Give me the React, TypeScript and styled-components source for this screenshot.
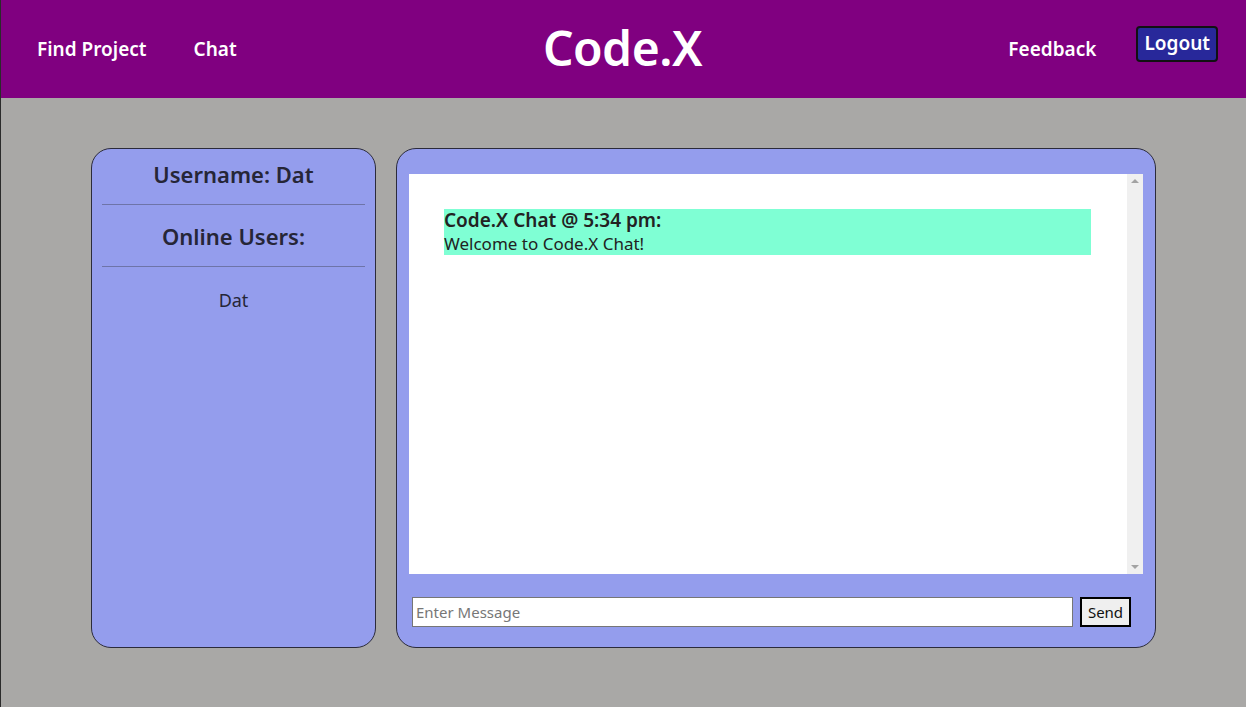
import React from "react";
import styled, { createGlobalStyle } from "styled-components";

const GlobalStyle = createGlobalStyle`
  html, body {
    margin: 0;
    padding: 0;
    height: 100%;
    background: #a9a8a6;
  }
  body {
    font-family: "Noto Sans", "Open Sans", sans-serif;
  }
  #root {
    min-height: 100%;
  }
`;

const Page = styled.div`
  min-height: 707px;
  border-left: 1px solid #2b2b2b;
  box-sizing: border-box;
  background: #a9a8a6;
`;

const Header = styled.header`
  height: 98px;
  background: #800080;
  display: grid;
  grid-template-columns: 1fr auto 1fr;
  align-items: center;
  padding: 0 28px 0 36px;
  box-sizing: border-box;
`;

const NavGroup = styled.nav<{ $right?: boolean }>`
  display: flex;
  align-items: center;
  gap: ${(p) => (p.$right ? "40px" : "47px")};
  justify-content: ${(p) => (p.$right ? "flex-end" : "flex-start")};
`;

const NavLink = styled.a`
  color: #fff;
  font-weight: 600;
  font-size: 19px;
  text-decoration: none;
  cursor: pointer;
`;

const Brand = styled.h1`
  margin: 0 10px 0 0;
  color: #fff;
  font-size: 48px;
  font-weight: 600;
  letter-spacing: -0.5px;
  padding-bottom: 4px;
`;

const LogoutButton = styled.button`
  background: #28289a;
  color: #fff;
  border: 2px solid #111;
  border-radius: 4px;
  font-family: inherit;
  font-size: 19px;
  font-weight: 600;
  padding: 2px 6px 4px;
  margin-top: -10px;
  cursor: pointer;
`;

const Main = styled.main`
  display: flex;
  gap: 20px;
  padding: 50px 0 0 90px;
`;

const Panel = styled.section`
  background: #949ded;
  border: 1px solid #2b2b3b;
  border-radius: 20px;
  height: 500px;
  box-sizing: border-box;
`;

const Sidebar = styled(Panel)`
  width: 285px;
  padding: 9px 10px 0;
  text-align: center;
  color: #262637;
`;

const SideTitle = styled.h2`
  margin: 0;
  font-size: 22px;
  font-weight: 600;
  line-height: 32px;
`;

const Divider = styled.hr`
  border: none;
  border-top: 1px solid #6e74a8;
  margin: 14px 0 15px;
`;

const UserItem = styled.div`
  font-size: 18px;
  margin-top: 21px;
`;

const ChatPanel = styled(Panel)`
  width: 760px;
  padding: 25px 12px 0;
  display: flex;
  flex-direction: column;
`;

const MessageArea = styled.div`
  height: 400px;
  background: #fff;
  display: flex;
  box-sizing: border-box;
`;

const Messages = styled.div`
  flex: 1;
  padding: 35px 36px 0 35px;
`;

const Scrollbar = styled.div`
  width: 16px;
  background: #f0f0f0;
  display: flex;
  flex-direction: column;
  justify-content: space-between;
  align-items: center;
  padding: 5px 0;
`;

const Arrow = styled.div<{ $down?: boolean }>`
  width: 0;
  height: 0;
  border-left: 4px solid transparent;
  border-right: 4px solid transparent;
  ${(p) =>
    p.$down
      ? "border-top: 4px solid #a3a3a3;"
      : "border-bottom: 4px solid #a3a3a3;"}
`;

const Message = styled.div`
  background: #7fffd4;
  color: #222;
  font-size: 17px;
  line-height: 23px;
  padding: 0;
`;

const MessageHead = styled.div`
  font-weight: 600;
  font-size: 19px;
`;

const InputRow = styled.form`
  display: flex;
  align-items: center;
  gap: 7px;
  margin-top: 23px;
  padding: 0 12px 0 3px;
`;

const MessageInput = styled.input`
  flex: 1;
  height: 30px;
  box-sizing: border-box;
  border: 1px solid #767676;
  font-family: inherit;
  font-size: 15px;
  padding: 0 3px;
  color: #222;
  &::placeholder {
    color: #777;
  }
`;

const SendButton = styled.button`
  height: 30px;
  width: 51px;
  box-sizing: border-box;
  border: 2px solid #000;
  background: #efefef;
  font-family: inherit;
  font-size: 15px;
  color: #111;
  padding: 0;
`;

export default function App() {
  return (
    <Page>
      <GlobalStyle />
      <Header>
        <NavGroup>
          <NavLink>Find Project</NavLink>
          <NavLink>Chat</NavLink>
        </NavGroup>
        <Brand>Code.X</Brand>
        <NavGroup $right>
          <NavLink>Feedback</NavLink>
          <LogoutButton>Logout</LogoutButton>
        </NavGroup>
      </Header>
      <Main>
        <Sidebar>
          <SideTitle>Username: Dat</SideTitle>
          <Divider />
          <SideTitle>Online Users:</SideTitle>
          <Divider />
          <UserItem>Dat</UserItem>
        </Sidebar>
        <ChatPanel>
          <MessageArea>
            <Messages>
              <Message>
                <MessageHead>Code.X Chat @ 5:34 pm:</MessageHead>
                Welcome to Code.X Chat!
              </Message>
            </Messages>
            <Scrollbar>
              <Arrow />
              <Arrow $down />
            </Scrollbar>
          </MessageArea>
          <InputRow onSubmit={(e) => e.preventDefault()}>
            <MessageInput placeholder="Enter Message" />
            <SendButton type="submit">Send</SendButton>
          </InputRow>
        </ChatPanel>
      </Main>
    </Page>
  );
}
